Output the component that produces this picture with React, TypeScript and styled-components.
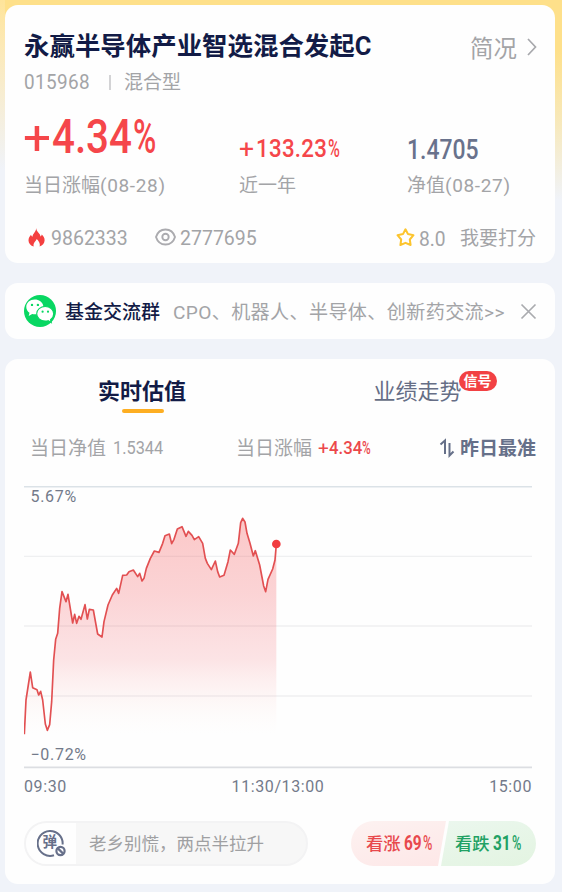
import React from "react";
import styled, { createGlobalStyle } from "styled-components";

const Global = createGlobalStyle`
  * { box-sizing: border-box; }
  body {
    margin: 0;
    background: #f0f3f9;
    font-family: Roboto, "Noto Sans CJK SC", sans-serif;
    color: #9d9fa3;
  }
`;

const Page = styled.main`
  width: 562px;
  height: 892px;
  padding: 5px 7px 0 5px;
  display: flex;
  flex-direction: column;
  gap: 20px;
  overflow: hidden;
  background:
    linear-gradient(180deg, #fee49a 0, #fce9b6 45px, #f7edd2 95px, #f0f3f9 170px) 0 0 / 5px 200px no-repeat,
    linear-gradient(180deg, #fee08a 0, #fee08a 50px, #f7e9bd 125px, #f0f3f9 200px);
`;

const Card = styled.section<{ $h: number }>`
  height: ${(p) => p.$h}px;
  flex: none;
  border-radius: 13px;
  background: #fefefe;
`;

const Row = styled.div<{ $h: number; $mt?: number }>`
  display: flex;
  align-items: center;
  height: ${(p) => p.$h}px;
  margin-top: ${(p) => p.$mt ?? 0}px;
`;

/* Fixed-width text slot; the glyphs inside may be condensed horizontally. */
const Slot = styled.span<{ $w: number; $ml?: number }>`
  display: block;
  flex: none;
  width: ${(p) => p.$w}px;
  margin-left: ${(p) => p.$ml ?? 0}px;
  white-space: nowrap;
`;

const Glyphs = styled.span<{
  $size: number; $color?: string; $weight?: number; $sx?: number; $ls?: number; $dy?: number;
}>`
  display: block;
  width: max-content;
  font-size: ${(p) => p.$size}px;
  line-height: 1.2;
  font-weight: ${(p) => p.$weight ?? 400};
  color: ${(p) => p.$color ?? "#a3a4a7"};
  letter-spacing: ${(p) => p.$ls ?? 0}px;
  transform: translateY(${(p) => p.$dy ?? 0}px) scaleX(${(p) => p.$sx ?? 1});
  transform-origin: left center;
`;

const Spaced = styled.span`
  letter-spacing: 0.65px;
`;

type TextProps = {
  w: number; ml?: number; size: number; color?: string; weight?: number;
  sx?: number; ls?: number; dy?: number; children: React.ReactNode;
};

const Text = ({ w, ml, size, color, weight, sx, ls, dy, children }: TextProps) => (
  <Slot $w={w} $ml={ml}>
    <Glyphs $size={size} $color={color} $weight={weight} $sx={sx} $ls={ls} $dy={dy}>{children}</Glyphs>
  </Slot>
);

const Divider = styled.span`
  width: 2px;
  height: 15px;
  margin-left: 19px;
  background: #d3d3d5;
  flex: none;
`;

const Icon = styled.svg<{ $ml: number }>`
  flex: none;
  margin-left: ${(p) => p.$ml}px;
  overflow: visible;
`;

const Tabs = styled.nav`
  display: grid;
  grid-template-columns: 1fr 1fr;
  height: 54px;
  padding-top: 19px;
`;

const Tab = styled.div<{ $active?: boolean }>`
  position: relative;
  justify-self: start;
  width: 88px;
  height: 35px;
  margin-left: ${(p) => (p.$active ? 93 : 93.5)}px;
  font-size: 22px;
  line-height: 27px;
  white-space: nowrap;
  font-weight: ${(p) => (p.$active ? 700 : 400)};
  color: ${(p) => (p.$active ? "#121b46" : "#666e86")};
`;

const Underline = styled.i`
  display: block;
  width: 42px;
  height: 4px;
  margin: 4px 0 0 23.5px;
  border-radius: 2px;
  background: #fdae22;
`;

const Badge = styled.span`
  position: absolute;
  left: 85px;
  top: -7px;
  width: 38px;
  height: 20px;
  border-radius: 10px;
  background: #f24143;
  color: #fff;
  font-size: 14px;
  font-weight: 700;
  line-height: 21px;
  text-align: center;
`;

const ChartBox = styled.div`
  position: relative;
  width: 508px;
  height: 283px;
  margin: 25px 0 0 19px;
  svg { display: block; }
`;

const AxisLabel = styled.span<{ $top: number }>`
  position: absolute;
  left: 6.5px;
  top: ${(p) => p.$top}px;
  font-size: 16px;
  line-height: 20px;
  letter-spacing: 0.7px;
  color: #737a8a;
`;

const Times = styled.div`
  display: grid;
  grid-template-columns: 1fr auto 1fr;
  width: 508px;
  margin: 8px 0 0 19px;
  font-size: 16px;
  line-height: 20px;
  letter-spacing: 0.6px;
  color: #737a8a;
  span:last-child { text-align: right; }
`;

const Composer = styled.div`
  display: flex;
  width: 284px;
  height: 45px;
  margin-left: 19px;
  border: 2px solid #f3f3f4;
  border-radius: 23px;
  overflow: hidden;
  background: #f7f7f7;
`;

const ComposerIcon = styled.div`
  display: flex;
  align-items: center;
  width: 50px;
  background: #fefefe;
`;

const Placeholder = styled.div`
  padding-left: 13px;
  font-size: 17.5px;
  line-height: 42px;
  color: #9fa0a2;
`;

const Votes = styled.div`
  display: flex;
  margin-left: 43px;
`;

const Vote = styled.div<{ $down?: boolean }>`
  display: flex;
  align-items: center;
  width: ${(p) => (p.$down ? 96 : 95)}px;
  height: 45px;
  margin-left: ${(p) => (p.$down ? -6 : 0)}px;
  background: ${(p) => p.$down
    ? "linear-gradient(165deg, #ebf7ee, #e3f4e1)"
    : "linear-gradient(165deg, #fdf2f1, #fde7e7)"};
  border-radius: ${(p) => (p.$down ? "0 23px 23px 0" : "23px 0 0 23px")};
  clip-path: ${(p) => p.$down
    ? "polygon(9px 0, 100% 0, 100% 100%, 1px 100%)"
    : "polygon(0 0, 100% 0, calc(100% - 8px) 100%, 0 100%)"};
`;

/* Chart samples as x,y pairs, three units per pixel. */
const TRACE =
  "1,745 6,642 19,558 26,605 39,611 44,627 50,616 56,642 64,714 70,733 77,716 83,647 89,522 95,460 101,442 107,367 114,317 126,347 132,325 146,411 152,385 158,412 165,391 171,400 183,356 190,399 196,370 208,372 221,444 234,453 240,407 252,357 265,327 278,307 284,322 296,268 308,267 315,257 328,252 341,272 347,262 354,285 360,277 367,247 379,217 391,195 405,199 416,172 423,149 436,144 443,173 450,160 460,129 474,122 486,151 493,136 504,148 511,161 524,152 536,172 544,217 550,232 562,251 574,225 581,257 587,273 600,268 612,227 619,192 631,205 643,172 650,110 656,97 663,108 669,142 678,172 688,210 694,194 707,237 719,300 725,317 732,280 746,249 753,222 757,174";

const Chart = () => (
  <ChartBox>
    <svg width="508" height="283" viewBox="0 0 1524 849">
      <defs>
        <linearGradient id="area" x1="0" y1="97" x2="0" y2="745" gradientUnits="userSpaceOnUse">
          <stop offset="0" stopColor="#f5504f" stopOpacity=".31" />
          <stop offset=".35" stopColor="#f3545a" stopOpacity=".25" />
          <stop offset=".65" stopColor="#f2606a" stopOpacity=".17" />
          <stop offset="1" stopColor="#f9d9c8" stopOpacity="0" />
        </linearGradient>
      </defs>
      <g strokeWidth="4">
        <path d="M0 211H1524M0 420H1524M0 630H1524" stroke="#eff0f1" />
        <path d="M0 2H1524" stroke="#dbe2e7" strokeWidth="5" />
        <path d="M0 844H1524" stroke="#dcdee2" strokeWidth="5" />
      </g>
      <path d={`M${TRACE.split(" ").join("L")}V745H1Z`} fill="url(#area)" />
      <polyline points={TRACE} fill="none" stroke="#e25052" strokeWidth="5" strokeLinejoin="round" />
      <circle cx="757" cy="174" r="13" fill="#f13c40" />
    </svg>
    <AxisLabel $top={1}>5.67%</AxisLabel>
    <AxisLabel $top={259}>−0.72%</AxisLabel>
  </ChartBox>
);

const Flame = () => (
  <Icon $ml={23} width="17" height="19" viewBox="0 0 17 19">
    <path fill="#f43f3f" d="M8.200 0C8.200 3.800 12.400 5.200 12.500 8.600c.7-.5 1.100-1.200 1.200-2.100C15.500 8.200 16.800 10.200 16.600 12.600c-.2 2.900-2 5.100-5 5.900.6-1.800.3-4.500-3-7.500C8.300 13.300 4.800 14.500 5.700 18.500 2.700 17.700.5 15.500.5 12.500c0-2.600 1.200-4.200 2.500-5.700.2 1 .7 1.700 1.500 2C4.700 5.500 8 4.200 8.200 0Z" />
  </Icon>
);

const Eye = () => (
  <Icon $ml={27} width="21" height="18" viewBox="0 0 21 18" fill="none" stroke="#ababaf" strokeWidth="1.900">
    <path d="M1 9C2.500 4.200 6 1.500 10.500 1.500S18.500 4.200 20 9c-1.500 4.800-5 7.500-9.500 7.500S2.500 13.800 1 9Z" strokeLinejoin="round" />
    <circle cx="10.500" cy="9" r="3.200" />
  </Icon>
);

const Star = () => (
  <Icon $ml={138} width="19" height="19" viewBox="0 0 19 19" fill="none" stroke="#fcc42d" strokeWidth="2" strokeLinejoin="round">
    <path d="m9.500 1.300 2.500 4.800 5.500 1.100-3.700 4.300.8 5.500-5.100-2.200-5.100 2.200.8-5.500-3.700-4.300 5.500-1.100Z" />
  </Icon>
);

const WeChat = () => (
  <Icon $ml={19} width="32" height="32" viewBox="0 0 32 32">
    <circle cx="16" cy="16" r="16" fill="#08d762" />
    <path fill="#fff" d="M10.700 4.500C6 4.500 2.300 7.700 2.300 11.900c0 2.300 1.200 4.400 3.200 5.800l-.8 3.200 3.500-1.900c1.500.4 3.100.5 4.500.2l5.800-7.100.8-1.300C18.600 7.100 15 4.500 10.700 4.500Z" />
    <path fill="#fff" stroke="#08d762" strokeWidth="1.100" d="M21.200 11.500c-4.800 0-8.500 3.200-8.500 7.300s3.700 7.300 8.500 7.300c1 0 2-.1 2.900-.4l3.200 1.800-.8-2.800c2-1.400 3.200-3.500 3.200-5.900 0-4.100-3.800-7.300-8.500-7.300Z" />
    <g fill="#08d762">
      <circle cx="8" cy="9.900" r="1.200" /><circle cx="13.900" cy="9.900" r="1.200" />
      <circle cx="18.600" cy="16.700" r="1.100" /><circle cx="24" cy="16.700" r="1.100" />
    </g>
  </Icon>
);

const DanmuRing = styled.div`
  position: relative;
  width: 30px;
  height: 30px;
  margin-left: 11px;
  svg { display: block; }
  span {
    position: absolute;
    left: 5.5px;
    top: 5px;
    font-size: 14.500px;
    font-weight: 700;
    line-height: 18px;
    color: #67708a;
  }
`;

const Danmu = () => (
  <DanmuRing>
    <svg width="30" height="30" viewBox="0 0 30 30" fill="none" stroke="#67708a" strokeWidth="2">
      <path d="M17 26.300A12.500 12.500 0 1 1 25.600 15.500" />
      <circle cx="23.500" cy="22" r="4.100" strokeWidth="2.200" />
      <path d="m20.600 19.100 5.800 5.800" strokeWidth="2.200" />
    </svg>
    <span>弹</span>
  </DanmuRing>
);

export default function App() {
  return (
    <>
      <Global />
      <Page>
        <Card $h={258}>
          <Row $h={30} $mt={26}>
            <Text ml={19} w={446} size={25.45} weight={700} color="#121b46" dy={-0.5}>永赢半导体产业智选混合发起C</Text>
            <Text w={47} size={23.4} color="#a3a4a7" dy={3}>简况</Text>
            <Icon $ml={10} width="9" height="16" viewBox="0 0 9 14" fill="none" stroke="#a7a8ac" strokeWidth="1.700">
              <path d="m1 0 7.500 8L1 16" />
            </Icon>
          </Row>
          <Row $h={24} $mt={9}>
            <Text ml={19} w={66} size={19.500} sx={0.97} ls={0.4} dy={1}>015968</Text>
            <Divider />
            <Text ml={13} w={60} size={19} dy={1}>混合型</Text>
          </Row>
          <Row $h={56} $mt={14}>
            <Text ml={18} w={29} size={48} weight={400} sx={1.03} color="#f5464a" dy={2}>+</Text>
            <Text w={81} size={48} weight={500} sx={0.84} color="#f5464a" dy={1}>4.34</Text>
            <Text w={106} size={48} weight={500} sx={0.66} color="#f5464a" dy={1}>%</Text>
            <Text w={17} size={26.500} weight={400} sx={1} color="#f5464a" dy={13}>+</Text>
            <Text w={72} size={26.500} weight={500} sx={0.84} ls={0.35} color="#f5464a" dy={12}>133.23</Text>
            <Text w={79} size={26.500} sx={0.61} weight={500} color="#f5464a" dy={12}>%</Text>
            <Text w={80} size={27} weight={500} sx={0.85} color="#69728c" dy={14}>1.4705</Text>
          </Row>
          <Row $h={24} $mt={8}>
            <Text ml={19} w={215} size={19} dy={1.5}>当日涨幅<Spaced>(08-28)</Spaced></Text>
            <Text w={168} size={19} dy={1.5}>近一年</Text>
            <Text w={110} size={19} dy={1.5}>净值<Spaced>(08-27)</Spaced></Text>
          </Row>
          <Row $h={26} $mt={28}>
            <Flame />
            <Text ml={6} w={77} size={19.500} dy={2}>9862333</Text>
            <Eye />
            <Text ml={4} w={78} size={19.500} dy={2}>2777695</Text>
            <Star />
            <Text ml={4} w={41} size={20} sx={0.96} dy={2}>8.0</Text>
            <Text w={78} size={19} dy={2}>我要打分</Text>
          </Row>
        </Card>

        <Card $h={56}>
          <Row $h={56}>
            <WeChat />
            <Text ml={9} w={108} size={19} weight={500} color="#121b46" dy={1.5}>基金交流群</Text>
            <Text w={345} size={19.100} ls={0.36} dy={1.5}>CPO、机器人、半导体、创新药交流&gt;&gt;</Text>
            <Icon $ml={3} width="15" height="15" viewBox="0 0 15 15" fill="none" stroke="#aaabaf" strokeWidth="1.700">
              <path d="m.5.500 14 14m0-14-14 14" />
            </Icon>
          </Row>
        </Card>

        <Card $h={525}>
          <Tabs>
            <Tab $active>实时估值<Underline /></Tab>
            <Tab>业绩走势<Badge>信号</Badge></Tab>
          </Tabs>
          <Row $h={26} $mt={22}>
            <Text ml={25} w={83} size={19} dy={1}>当日净值</Text>
            <Text w={123} size={19} sx={0.86}>1.5344</Text>
            <Text w={82} size={19} dy={1}>当日涨幅</Text>
            <Text w={11} size={19} sx={1} color="#ec484b" dy={1}>+</Text>
            <Text w={33} size={19} sx={0.88} weight={500} color="#ec484b">4.34</Text>
            <Text w={78} size={19} sx={0.62} weight={500} color="#ec484b">%</Text>
            <Icon $ml={0} width="15" height="18" viewBox="0 0 15 18" fill="none" stroke="#667089" strokeWidth="2">
              <path d="M.5 5.500 5 1.500V15M9.500 4v12.500l4-4" />
            </Icon>
            <Text ml={5} w={77} size={19} weight={700} color="#667089" dy={1}>昨日最准</Text>
          </Row>
          <Chart />
          <Times><span>09:30</span><span>11:30/13:00</span><span>15:00</span></Times>
          <Row $h={45} $mt={24}>
            <Composer>
              <ComposerIcon><Danmu /></ComposerIcon>
              <Placeholder>老乡别慌，两点半拉升</Placeholder>
            </Composer>
            <Votes>
              <Vote>
                <Text ml={15} w={38} size={17.300} weight={500} color="#e8494d" dy={1}>看涨</Text>
                <Text w={18.5} size={19.500} weight={700} sx={0.79} color="#e8494d">69</Text>
                <Text w={12} size={19.500} weight={500} sx={0.65} color="#e8494d">%</Text>
              </Vote>
              <Vote $down>
                <Text ml={15} w={38} size={17.300} weight={500} color="#21a164" dy={1}>看跌</Text>
                <Text w={18.5} size={19.500} weight={700} sx={0.79} color="#21a164">31</Text>
                <Text w={12} size={19.500} weight={500} sx={0.65} color="#21a164">%</Text>
              </Vote>
            </Votes>
          </Row>
        </Card>
      </Page>
    </>
  );
}
